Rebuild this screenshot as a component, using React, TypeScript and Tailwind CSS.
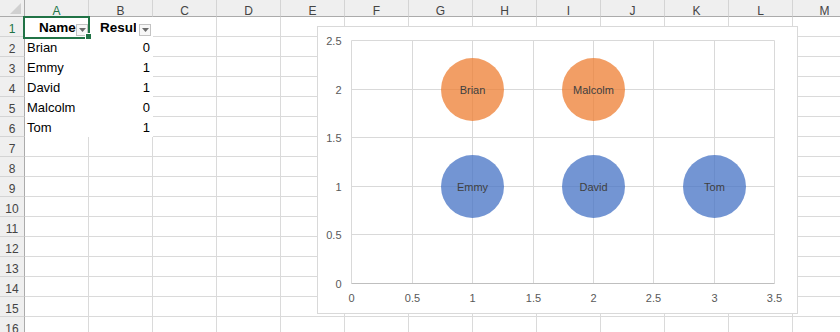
import React from 'react';

const COLS = ['A', 'B', 'C', 'D', 'E', 'F', 'G', 'H', 'I', 'J', 'K', 'L', 'M'];
const ROWS = Array.from({ length: 16 }, (_, i) => i + 1);
const DATA: [string, number][] = [
  ['Brian', 0],
  ['Emmy', 1],
  ['David', 1],
  ['Malcolm', 0],
  ['Tom', 1],
];

function FilterButton() {
  return (
    <div className="w-[12px] h-[12px] shrink-0 self-end mb-[1px] border border-[#c3c3c3] bg-[#f7f7f7] flex items-center justify-center">
      <svg width="7" height="4" viewBox="0 0 7 4">
        <path d="M0 0 H7 L3.5 4 Z" fill="#6b6b6b" />
      </svg>
    </div>
  );
}

function Cell({ r, c }: { r: number; c: string }) {
  const inTable = r <= 6 && (c === 'A' || c === 'B');
  if (!inTable) {
    return <div className="w-[64px] shrink-0 h-full border-r border-b border-[#dadada]" />;
  }
  if (r === 1 && c === 'A') {
    return (
      <div className="w-[64px] shrink-0 h-full flex">
        <div className="w-[51px] shrink-0 overflow-hidden whitespace-nowrap pl-[14px] font-bold text-[13.5px] leading-[22px] text-black">
          Name
        </div>
        <FilterButton />
        <div className="w-[1px] shrink-0" />
      </div>
    );
  }
  if (r === 1 && c === 'B') {
    return (
      <div className="w-[64px] shrink-0 h-full flex">
        <div className="w-[47px] shrink-0 overflow-hidden whitespace-nowrap pl-[11px] font-bold text-[13.5px] leading-[22px] text-black">
          Result
        </div>
        <div className="w-[3px] shrink-0" />
        <FilterButton />
        <div className="w-[2px] shrink-0" />
      </div>
    );
  }
  const [name, val] = DATA[r - 2];
  if (c === 'A') {
    return (
      <div className="w-[64px] shrink-0 h-full pl-[2px] text-[13px] leading-[22px] text-black whitespace-nowrap">
        {name}
      </div>
    );
  }
  return (
    <div className="w-[64px] shrink-0 h-full pr-[3px] text-right text-[13px] leading-[22px] text-black">{val}</div>
  );
}

const VX = [34, 95, 155, 216, 276, 336, 397, 457];
const XL = ['0', '0.5', '1', '1.5', '2', '2.5', '3', '3.5'];
const HY = [257, 208, 160, 111, 63, 14];
const YL = ['0', '0.5', '1', '1.5', '2', '2.5'];

const BUBBLES = [
  { x: 155.5, y: 63.5, label: 'Brian', fill: 'rgba(237,125,49,0.75)' },
  { x: 276.5, y: 63.5, label: 'Malcolm', fill: 'rgba(237,125,49,0.75)' },
  { x: 155.5, y: 160.5, label: 'Emmy', fill: 'rgba(68,114,196,0.75)' },
  { x: 276.5, y: 160.5, label: 'David', fill: 'rgba(68,114,196,0.75)' },
  { x: 397.5, y: 160.5, label: 'Tom', fill: 'rgba(68,114,196,0.75)' },
];

function Chart() {
  return (
    <div className="absolute left-[317px] top-[26px] w-[481px] h-[288px] bg-white">
      <svg width="481" height="288" viewBox="0 0 481 288" className="block">
        <rect x="0.5" y="0.5" width="480" height="287" fill="#fff" stroke="#d9d9d9" />
        {VX.map((x) => (
          <line key={'v' + x} x1={x + 0.5} x2={x + 0.5} y1={14.5} y2={257.5} stroke="#d9d9d9" />
        ))}
        {HY.map((y) => (
          <line key={'h' + y} x1={34.5} x2={457.5} y1={y + 0.5} y2={y + 0.5} stroke={y === 257 ? '#bfbfbf' : '#d9d9d9'} />
        ))}
        {BUBBLES.map((b) => (
          <circle key={b.label} cx={b.x} cy={b.y} r={31.5} fill={b.fill} />
        ))}
        <g fontFamily="'Liberation Sans', Arial, sans-serif" fontSize="11">
          {BUBBLES.map((b) => (
            <text key={'t' + b.label} x={b.x} y={b.y + 4} textAnchor="middle" fill="#404040">
              {b.label}
            </text>
          ))}
          {HY.map((y, i) => (
            <text key={'yl' + y} x={24.5} y={y + 4.5} textAnchor="end" fill="#595959">
              {YL[i]}
            </text>
          ))}
          {VX.map((x, i) => (
            <text key={'xl' + x} x={x + 0.5} y={276} textAnchor="middle" fill="#595959">
              {XL[i]}
            </text>
          ))}
        </g>
      </svg>
    </div>
  );
}

export default function App() {
  return (
    <div className="relative w-[840px] h-[332px] overflow-hidden bg-white font-['Liberation_Sans',Arial,sans-serif]">
      <div className="flex h-[17px]">
        <div className="w-[25px] shrink-0 h-full bg-[#efefef] border-r border-b border-[#ababab] relative">
          <svg width="24" height="16" viewBox="0 0 24 16" className="absolute left-0 top-0">
            <path d="M21 3 V14 H10 Z" fill="#d0d0d0" />
          </svg>
        </div>
        {COLS.map((c) => (
          <div
            key={c}
            className={`w-[64px] shrink-0 h-full bg-[#efefef] border-r border-r-[#d4d4d4] border-b border-b-[#ababab] text-center text-[12px] leading-[22px] ${
              c === 'A' ? 'text-[#217346]' : 'text-[#444444]'
            }`}
          >
            {c}
          </div>
        ))}
      </div>
      {ROWS.map((r) => (
        <div key={r} className="flex h-[20px]">
          <div
            className={`w-[25px] shrink-0 h-full bg-[#efefef] border-r border-r-[#ababab] border-b border-b-[#d4d4d4] text-center text-[12px] leading-[24px] ${
              r === 1 ? 'text-[#217346]' : 'text-[#444444]'
            }`}
          >
            {r}
          </div>
          {COLS.map((c) => (
            <Cell key={c} r={r} c={c} />
          ))}
        </div>
      ))}
      <div className="absolute left-[23px] top-[16px] w-[67px] h-[23px] border-2 border-[#217346] pointer-events-none" />
      <div className="absolute left-[85px] top-[33px] w-[7px] h-[7px] bg-[#217346] border border-white" />
      <Chart />
    </div>
  );
}
